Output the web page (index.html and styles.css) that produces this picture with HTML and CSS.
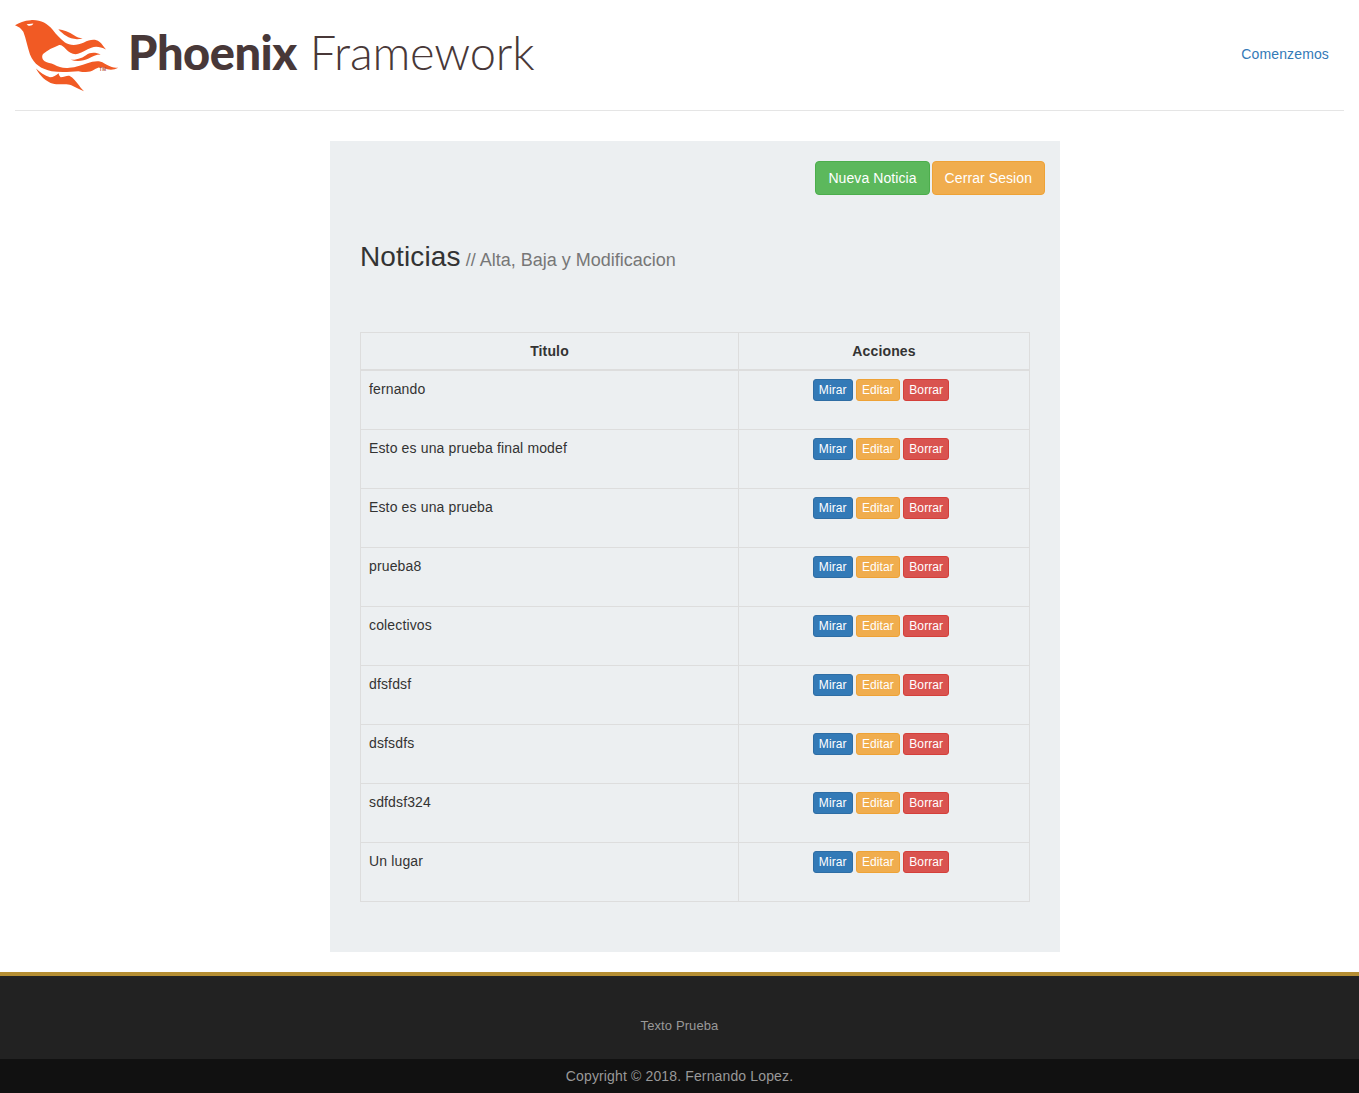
FILE: index.html

```html
<!DOCTYPE html>
<html>
  <head>
    <title>Noticias</title>
    <link rel="stylesheet" href="styles.css">
  </head>
  <body>
    <header class="top">
      <a class="brand" href="#">
        <svg class="bird" width="104" height="72" viewBox="15 15 312 215">
          <path fill="#f15a24" d="M15 30 C28 22 42 16 62 15 C90 13 112 24 128 44 C140 60 150 70 165 82 C180 92 200 92 222 82 C238 74 255 70 268 80 C276 86 280 94 288 103 C272 96 258 92 244 98 C228 104 218 112 204 116 C190 120 178 112 168 102 C160 94 154 88 146 90 C132 96 112 104 100 116 C94 122 96 132 104 138 C112 144 122 142 132 148 C146 156 160 160 178 158 C198 156 214 150 232 144 C250 138 268 134 282 144 C292 150 305 158 325 158 C310 166 295 166 282 158 C272 152 262 158 252 164 C240 172 225 172 205 168 C180 170 150 172 125 168 C95 162 72 148 60 118 C52 95 48 70 40 50 C34 40 26 34 15 30 Z"/>
          <path fill="#f15a24" d="M145 42 C160 44 178 50 192 60 C200 66 208 68 218 70 C200 74 182 72 168 62 C160 56 152 50 145 42 Z"/>
          <path fill="#f15a24" d="M182 134 C198 134 214 130 228 120 C242 110 258 112 272 118 C258 118 248 124 236 130 C220 138 200 140 182 134 Z"/>
          <path fill="#f15a24" d="M78 160 C90 172 104 182 120 186 C130 186 138 180 146 174 C146 178 148 182 152 186 C162 186 172 180 178 182 C190 188 198 200 208 212 C212 218 216 222 222 228 C208 222 196 216 184 210 C168 204 148 210 130 206 C108 200 90 182 78 160 Z"/>
          <path fill="#fff" d="M50 27 L70 25 C68 31 60 33 54 31 Z"/>
          <text class="tm" x="268" y="168">TM</text>
        </svg>
        <span class="brand-bold">Phoenix</span>
        <span class="brand-thin">Framework</span>
      </a>
      <nav class="nav">
        <a href="#">Comenzemos</a>
      </nav>
    </header>

    <main class="panel">
      <div class="panel-actions">
        <a class="btn btn-success" href="#">Nueva Noticia</a>
        <a class="btn btn-warning" href="#">Cerrar Sesion</a>
      </div>

      <h3 class="title">Noticias <small>// Alta, Baja y Modificacion</small></h3>

      <table class="news">
        <thead>
          <tr>
            <th class="col-title">Titulo</th>
            <th>Acciones</th>
          </tr>
        </thead>
        <tbody>
          <tr>
            <td>fernando</td>
            <td class="actions"><a class="btn-xs btn-primary" href="#">Mirar</a> <a class="btn-xs btn-warning" href="#">Editar</a> <a class="btn-xs btn-danger" href="#">Borrar</a></td>
          </tr>
          <tr>
            <td>Esto es una prueba final modef</td>
            <td class="actions"><a class="btn-xs btn-primary" href="#">Mirar</a> <a class="btn-xs btn-warning" href="#">Editar</a> <a class="btn-xs btn-danger" href="#">Borrar</a></td>
          </tr>
          <tr>
            <td>Esto es una prueba</td>
            <td class="actions"><a class="btn-xs btn-primary" href="#">Mirar</a> <a class="btn-xs btn-warning" href="#">Editar</a> <a class="btn-xs btn-danger" href="#">Borrar</a></td>
          </tr>
          <tr>
            <td>prueba8</td>
            <td class="actions"><a class="btn-xs btn-primary" href="#">Mirar</a> <a class="btn-xs btn-warning" href="#">Editar</a> <a class="btn-xs btn-danger" href="#">Borrar</a></td>
          </tr>
          <tr>
            <td>colectivos</td>
            <td class="actions"><a class="btn-xs btn-primary" href="#">Mirar</a> <a class="btn-xs btn-warning" href="#">Editar</a> <a class="btn-xs btn-danger" href="#">Borrar</a></td>
          </tr>
          <tr>
            <td>dfsfdsf</td>
            <td class="actions"><a class="btn-xs btn-primary" href="#">Mirar</a> <a class="btn-xs btn-warning" href="#">Editar</a> <a class="btn-xs btn-danger" href="#">Borrar</a></td>
          </tr>
          <tr>
            <td>dsfsdfs</td>
            <td class="actions"><a class="btn-xs btn-primary" href="#">Mirar</a> <a class="btn-xs btn-warning" href="#">Editar</a> <a class="btn-xs btn-danger" href="#">Borrar</a></td>
          </tr>
          <tr>
            <td>sdfdsf324</td>
            <td class="actions"><a class="btn-xs btn-primary" href="#">Mirar</a> <a class="btn-xs btn-warning" href="#">Editar</a> <a class="btn-xs btn-danger" href="#">Borrar</a></td>
          </tr>
          <tr>
            <td>Un lugar</td>
            <td class="actions"><a class="btn-xs btn-primary" href="#">Mirar</a> <a class="btn-xs btn-warning" href="#">Editar</a> <a class="btn-xs btn-danger" href="#">Borrar</a></td>
          </tr>
        </tbody>
      </table>
    </main>

    <footer class="foot">
      <div class="foot-top">Texto Prueba</div>
      <div class="foot-bottom">Copyright © 2018. Fernando Lopez.</div>
    </footer>
  </body>
</html>
```

FILE: styles.css

```css
body {margin: 0; font-family: "Liberation Sans", Arial, sans-serif; font-size: 14px; line-height: 20px; letter-spacing: .14px; color: #333; background-color: #fff;}
a {text-decoration: none;}

.top {display: flex; justify-content: space-between; align-items: center; height: 110px; margin: 0 15px; border-bottom: 1px solid #e5e5e5;}
.brand {display: flex; align-items: center; color: #483838; height: 70px; margin-top: -1px;}
.bird {margin-right: 9px; margin-top: 3px;}
.tm {font-size: 14px; font-weight: 700; fill: #b5533c; letter-spacing: 0;}
.brand-bold {font-family: Lato, sans-serif; font-weight: 900; font-size: 47px; line-height: 50px; letter-spacing: -0.5px; margin: 0 13px 6px 0;}
.brand-thin {font-family: Lato, sans-serif; font-weight: 300; font-size: 47px; line-height: 50px; letter-spacing: -0.2px; margin-bottom: 6px;}
.nav {padding: 0 15px 2px 0;}
.nav a {color: #337ab7;}

.panel {box-sizing: border-box; width: 730px; height: 811px; margin: 30px 0 20px 330px; padding: 20px 30px 0; background-color: #eceff1;}
.panel-actions {display: flex; justify-content: flex-end; gap: 2px; margin-right: -15px;}
.btn {padding: 6px 12px; border: 1px solid; border-radius: 4px; letter-spacing: .08px; color: #fff;}
.btn-xs {display: inline-block; padding: 1px 5px; border: 1px solid; border-radius: 3px; font-size: 12px; line-height: 18px; letter-spacing: .1px; word-spacing: 0; color: #fff;}
.btn-success {background-color: #5cb85c; border-color: #4cae4c;}
.btn-warning {background-color: #f0ad4e; border-color: #eea236;}
.btn-primary {background-color: #337ab7; border-color: #2e6da4;}
.btn-danger {background-color: #d9534f; border-color: #d43f3a;}

.title {margin: 46px 0 56px; font-size: 28px; font-weight: 400; line-height: 31px; color: #333;}
.title small {margin-left: -3px; font-size: 18px; letter-spacing: 0; color: #777;}

.news {width: 670px; border-collapse: collapse; table-layout: fixed;}
.news th, .news td {border: 1px solid #ddd; padding: 8px; vertical-align: top;}
.news th {border-bottom-width: 2px; height: 20px; text-align: center;}
.news td {height: 42px;}
.col-title {width: 361px;}
.actions {text-align: center; word-spacing: -.7px; padding-right: 14px !important;}

.foot {border-top: 4px solid #b58e33;}
.foot-top {height: 83px; box-sizing: border-box; padding-top: 40px; background-color: #222; color: #999; font-size: 13px; letter-spacing: .1px; text-align: center;}
.foot-bottom {height: 34px; background-color: #111; color: #999; line-height: 34px; text-align: center;}
```
